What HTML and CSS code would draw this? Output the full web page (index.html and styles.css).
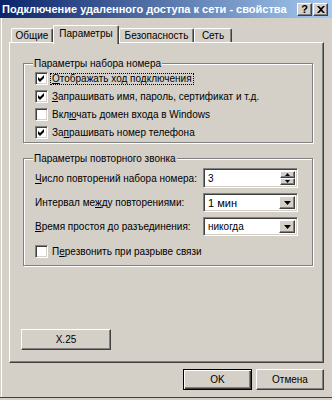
FILE: index.html
```html
<!DOCTYPE html>
<html lang="ru">
<head>
<meta charset="utf-8">
<title>Подключение удаленного доступа к сети - свойства</title>
<link rel="stylesheet" href="styles.css">
</head>
<body>
<div class="window">
  <div class="titlebar">
    <span class="title">Подключение удаленного доступа к сети - свойства</span>
    <div class="tb-buttons">
      <span class="tb-btn help">?</span>
      <span class="tb-btn close"><svg width="8" height="7" viewBox="0 0 8 7"><path d="M0 0h2l2 2 2-2h2L5 3.5 8 7H6L4 5 2 7H0l3-3.5z" fill="#000"/></svg></span>
    </div>
  </div>
  <div class="main">
    <div class="tabs">
      <div class="tab t1">Общие</div>
      <div class="tab t2 active">Параметры</div>
      <div class="tab t3">Безопасность</div>
      <div class="tab t4">Сеть</div>
    </div>
    <div class="panel">
      <fieldset class="group g1">
        <legend>Параметры набора номера</legend>
        <div class="check"><span class="box"><svg width="7" height="7" viewBox="0 0 7 7"><path d="M0 2l2 2 4-4v3l-4 4-2-2z" fill="#000"/></svg></span><span class="focus"><u>О</u>тображать ход подключения</span></div>
        <div class="check"><span class="box"><svg width="7" height="7" viewBox="0 0 7 7"><path d="M0 2l2 2 4-4v3l-4 4-2-2z" fill="#000"/></svg></span><span><u>З</u>апрашивать имя, пароль, сертификат и т.д.</span></div>
        <div class="check"><span class="box"></span><span>Вкл<u>ю</u>чать домен входа в Windows</span></div>
        <div class="check"><span class="box"><svg width="7" height="7" viewBox="0 0 7 7"><path d="M0 2l2 2 4-4v3l-4 4-2-2z" fill="#000"/></svg></span><span>За<u>п</u>рашивать номер телефона</span></div>
      </fieldset>
      <fieldset class="group g2">
        <legend>Параметры повторного звонка</legend>
        <div class="grid">
          <span><u>Ч</u>исло повторений набора номера:</span>
          <div class="spin"><span class="val">3</span><span class="spin-btns"><span class="sb"><svg width="5" height="3" viewBox="0 0 5 3"><path d="M2.5 0L5 3H0z" fill="#000"/></svg></span><span class="sb"><svg width="5" height="3" viewBox="0 0 5 3"><path d="M0 0h5L2.5 3z" fill="#000"/></svg></span></span></div>
          <span>Интервал ме<u>ж</u>ду повторениями:</span>
          <div class="combo"><span class="val big">1 мин</span><span class="drop"><svg width="7" height="4" viewBox="0 0 7 4"><path d="M0 0h7L3.5 4z" fill="#000"/></svg></span></div>
          <span><u>В</u>ремя простоя до разъединения:</span>
          <div class="combo"><span class="val">никогда</span><span class="drop"><svg width="7" height="4" viewBox="0 0 7 4"><path d="M0 0h7L3.5 4z" fill="#000"/></svg></span></div>
        </div>
        <div class="check last"><span class="box"></span><span>П<u>е</u>резвонить при разрыве связи</span></div>
      </fieldset>
      <button class="btn x25">X.25</button>
    </div>
    <div class="actions">
      <button class="btn default">OK</button>
      <button class="btn cancel">Отмена</button>
    </div>
  </div>
</div>
</body>
</html>
```
FILE: styles.css
```css
* { box-sizing: border-box; }
html, body { margin: 0; }
body {
  width: 332px;
  height: 400px;
  overflow: hidden;
  background: #d4d0c8;
  font-family: "Liberation Sans", Arial, sans-serif;
  font-size: 10px;
  color: #000;
}
.window {
  height: 398px;
  display: flex;
  flex-direction: column;
  border-bottom: 1px solid #404040;
}
.titlebar {
  height: 18px;
  flex: none;
  display: flex;
  align-items: center;
  justify-content: space-between;
  padding: 0 4px 0 2px;
  background: linear-gradient(to right, #0a246a, #a6caf0);
  color: #fff;
  font-weight: bold;
  font-size: 11px;
}
.title { white-space: nowrap; }
.tb-buttons { display: flex; gap: 1px; }
.tb-btn {
  width: 15px;
  height: 13px;
  display: flex;
  align-items: center;
  justify-content: center;
  background: #d4d0c8;
  border: 1px solid;
  border-color: #fff #404040 #404040 #fff;
  box-shadow: inset -1px -1px #808080;
  color: #000;
  font-size: 11px;
  line-height: 11px;
}
.main {
  flex: 1;
  display: flex;
  flex-direction: column;
  margin-left: 1px;
  border-left: 1px solid #fff;
  padding: 7px 8px 0 7px;
}
.tabs {
  height: 17px;
  flex: none;
  display: flex;
  align-items: flex-end;
  padding-left: 2px;
}
.tab {
  height: 14px;
  display: flex;
  align-items: center;
  justify-content: center;
  border: 1px solid;
  border-bottom: 0;
  border-color: #fff #404040 #404040 #fff;
  box-shadow: inset -1px 0 #808080;
  border-radius: 2px 2px 0 0;
  white-space: nowrap;
}
.t1 { width: 42px; }
.t2 { width: 66px; }
.t3 { width: 75px; }
.t4 { width: 38px; }
.tab.active {
  height: 19px;
  margin-bottom: -2px;
  position: relative;
  z-index: 1;
  background: #d4d0c8;
  padding-bottom: 3px;
}
.panel {
  height: 321px;
  flex: none;
  display: flex;
  flex-direction: column;
  border: 1px solid;
  border-color: #fff #404040 #404040 #fff;
  box-shadow: inset -1px -1px #808080;
  padding: 14px 10px 12px 12px;
}
.group {
  margin: 0 0 0 1px;
  padding: 2px 14px 3px 11px;
  min-width: 0;
  border: 1px solid #808080;
  box-shadow: 1px 1px 0 #fff, inset 1px 1px 0 #fff;
}
.group legend {
  margin-left: -2px;
  padding: 0 1px;
  line-height: 13px;
  background: #d4d0c8;
}
.g2 { margin-top: 9px; padding-top: 3px; padding-bottom: 7px; }
.check {
  height: 13px;
  display: flex;
  align-items: center;
  gap: 4px;
  white-space: nowrap;
  margin-bottom: 5px;
}
.check:last-child { margin-bottom: 0; }
.check.last { margin-top: 9px; }
.box {
  width: 13px;
  height: 13px;
  flex: none;
  display: flex;
  align-items: center;
  justify-content: center;
  background: #fff;
  border: 1px solid;
  border-color: #808080 #fff #fff #808080;
  box-shadow: inset 1px 1px #404040, inset -1px -1px #d4d0c8;
}
.focus {
  border: 1px dotted #000;
  padding: 0 1px;
  margin-left: -2px;
  line-height: 10px;
}
.grid {
  display: grid;
  grid-template-columns: 1fr 95px;
  grid-template-rows: 20px 19px 19px;
  row-gap: 5px;
  align-items: center;
  white-space: nowrap;
}
.spin, .combo {
  height: 100%;
  display: flex;
  align-items: center;
  background: #fff;
  border: 1px solid;
  border-color: #808080 #fff #fff #808080;
  box-shadow: inset 1px 1px #404040, inset -1px -1px #d4d0c8;
  padding: 2px;
}
.val { flex: 1; padding-left: 2px; }
.val.big { font-size: 11px; }
.spin-btns {
  width: 15px;
  height: 100%;
  display: flex;
  flex-direction: column;
}
.sb, .drop {
  display: flex;
  align-items: center;
  justify-content: center;
  background: #d4d0c8;
  border: 1px solid;
  border-color: #fff #404040 #404040 #fff;
  box-shadow: inset -1px -1px #808080;
}
.sb { flex: 1; }
.drop { width: 16px; height: 100%; }
.btn {
  font: inherit;
  color: #000;
  margin: 0;
  padding: 0;
  background: #d4d0c8;
  border: 1px solid;
  border-color: #fff #404040 #404040 #fff;
  box-shadow: inset -1px -1px #808080;
  height: 21px;
}
.x25 {
  margin-top: auto;
  width: 90px;
  margin-left: -1px;
}
.actions {
  display: flex;
  justify-content: flex-end;
  gap: 4px;
  margin-top: 6px;
}
.default {
  width: 69px;
  border-color: #000;
  box-shadow: inset 1px 1px #fff, inset -1px -1px #404040, inset -2px -2px #808080;
}
.cancel { width: 68px; }
```
